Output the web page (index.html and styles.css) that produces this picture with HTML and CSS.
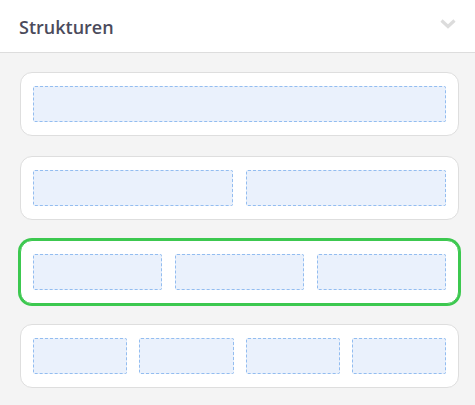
FILE: index.html
```html
<!DOCTYPE html>
<html lang="de">
<head>
    <meta charset="UTF-8">
    <meta name="viewport" content="width=device-width, initial-scale=1.0">
    <title>Strukturen</title>
    <link rel="stylesheet" href="styles.css">
</head>
<body>

    <div class="panel">
        <div class="panel-header">
            <h2>Strukturen</h2>
            <svg class="chevron" width="16" height="10" viewBox="0 0 16 10">
                <path d="M1.5 1.5 L8 7.5 L14.5 1.5" fill="none" stroke="#dcdcdc" stroke-width="3.2"/>
            </svg>
        </div>

        <div class="panel-body">
            <div class="structure cols-1">
                <div class="cell"></div>
            </div>
            <div class="structure cols-2">
                <div class="cell"></div>
                <div class="cell"></div>
            </div>
            <div class="structure cols-3 selected">
                <div class="cell"></div>
                <div class="cell"></div>
                <div class="cell"></div>
            </div>
            <div class="structure cols-4">
                <div class="cell"></div>
                <div class="cell"></div>
                <div class="cell"></div>
                <div class="cell"></div>
            </div>
        </div>
    </div>

</body>
</html>
```

FILE: styles.css
```css
body {
    font-family: 'Open Sans', sans-serif;
    margin: 0;
    background: #f4f4f4;
}

.panel {
    width: 475px;
    height: 405px;
    overflow: hidden;
}

.panel-header {
    height: 53px;
    background: white;
    border-bottom: 1px solid #dddddd;
    display: flex;
    align-items: center;
    justify-content: space-between;
    padding: 0 19px 0 19px;
    box-sizing: border-box;
}

.panel-header h2 {
    margin: 2px 0 0;
    font-size: 18px;
    font-weight: 600;
    color: #4b4b5c;
}

.chevron {
    margin-top: -4px;
}

.panel-body {
    padding: 19px 16px 0 20px;
    display: flex;
    flex-direction: column;
    gap: 20px;
}

.structure {
    height: 64px;
    box-sizing: border-box;
    background: white;
    border: 1px solid #dedede;
    border-radius: 12px;
    padding: 13px 12px;
    display: grid;
    gap: 13px;
}

.structure.selected {
    border-color: #3cc84f;
    box-shadow: 0 0 0 2px #3cc84f;
}

.cols-1 { grid-template-columns: 1fr; }
.cols-2 { grid-template-columns: repeat(2, 1fr); }
.cols-3 { grid-template-columns: repeat(3, 1fr); }
.cols-4 { grid-template-columns: repeat(4, 1fr); gap: 12px; }

.cell {
    background: #eaf1fc;
    border: 1px dashed #93bdf0;
    border-radius: 2px;
}
```
